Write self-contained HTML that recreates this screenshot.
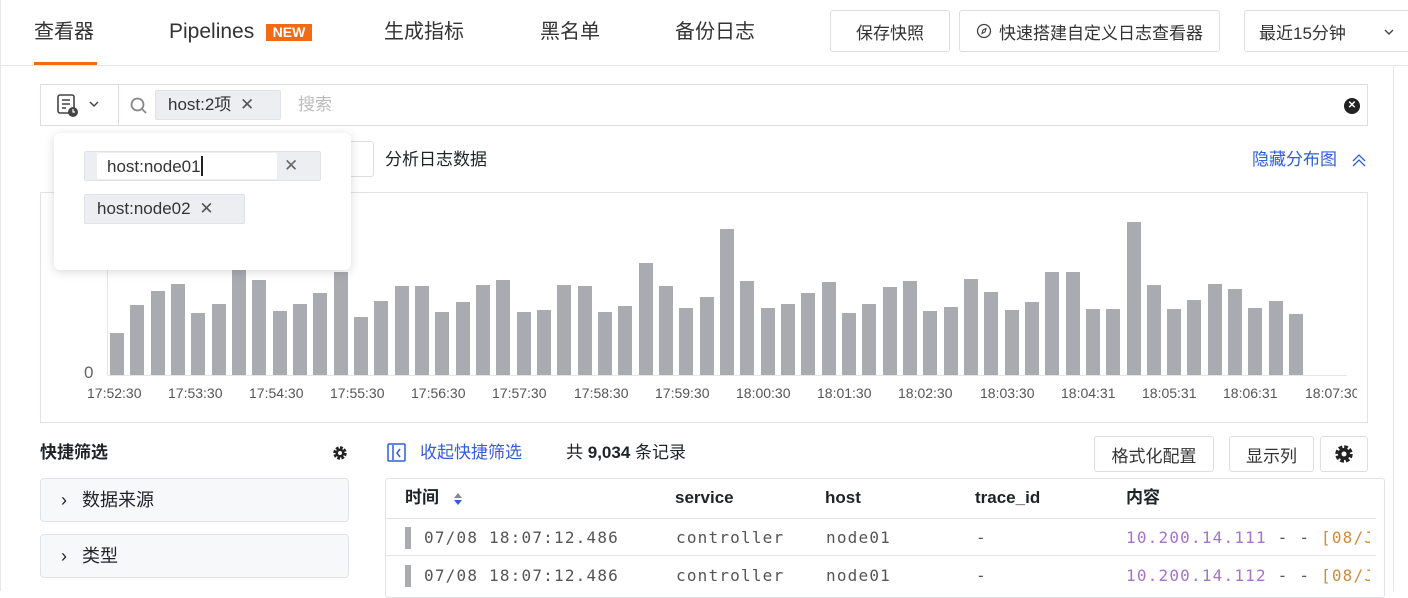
<!DOCTYPE html>
<html><head><meta charset="utf-8"><style>
*{box-sizing:border-box;margin:0;padding:0}
body{width:1408px;height:591px;overflow:hidden;background:#fff;font-family:"Liberation Sans","Noto Sans CJK SC",sans-serif;color:#1f2329;position:relative}
.a{position:absolute;line-height:1.25}
.tab{position:absolute;top:18px;font-size:20px;color:#333;line-height:28px;height:28px}
.btn{position:absolute;border:1px solid #dcdee3;border-radius:3px;background:#fff;font-size:16px;color:#333;display:flex;align-items:center;justify-content:center}
.bar{position:absolute;width:14px;background:#a9abb1}
.xl{position:absolute;top:385px;font-size:14px;color:#555}
.mono{font-family:"DejaVu Sans Mono","Liberation Mono",monospace;font-size:16px;color:#555;letter-spacing:1.2px}
.th{position:absolute;top:486px;font-size:17px;font-weight:bold;line-height:24px}
.tag{position:absolute;background:#eceef2;border:1px solid #e0e2e7;border-radius:2px;font-size:17px;color:#333}
</style></head><body>
<div class="a" style="left:0;top:0;width:1px;height:591px;background:#e6e7ea"></div>
<div class="a" style="left:0;top:65px;width:1408px;height:1px;background:#e6e7ea"></div>
<div class="tab" style="left:34px">查看器</div>
<div class="a" style="left:34px;top:62px;width:63px;height:3px;background:#f36a13"></div>
<div class="tab" style="left:169px;font-size:21px">Pipelines</div>
<div class="a" style="left:266px;top:24px;width:46px;height:17px;background:#f36a13;color:#fff;font-size:14px;font-weight:bold;text-align:center;line-height:17px">NEW</div>
<div class="tab" style="left:384px">生成指标</div>
<div class="tab" style="left:540px">黑名单</div>
<div class="tab" style="left:675px">备份日志</div>
<div class="btn" style="left:830px;top:10px;width:120px;height:42px;font-size:17px">保存快照</div>
<div class="btn" style="left:959px;top:10px;width:261px;height:42px;font-size:17px"><svg width="16" height="16" style="margin-right:7px"><circle cx="8" cy="8" r="6.5" fill="none" stroke="#444" stroke-width="1.3"/><path d="M10 5.5L7 7l-1 3.5 3-1.5z" fill="none" stroke="#444" stroke-width="1.1"/></svg>快速搭建自定义日志查看器</div>
<div class="btn" style="left:1244px;top:10px;width:170px;height:42px;justify-content:flex-start;padding-left:14px;font-size:17px">最近15分钟<svg style="position:absolute;left:138px;top:16px" width="12" height="10"><path d="M2 3l4 4 4-4" stroke="#444" stroke-width="1.4" fill="none"/></svg></div>
<div class="a" style="left:1393px;top:66px;width:1px;height:525px;background:#e6e7ea"></div>

<div class="a" style="left:40px;top:84px;width:1328px;height:42px;border:1px solid #dcdee3"></div>
<div class="a" style="left:118px;top:85px;width:1px;height:40px;background:#dcdee3"></div>
<svg class="a" style="left:57px;top:94px" width="48" height="24"><rect x="1" y="1" width="16" height="18" rx="2" fill="none" stroke="#444" stroke-width="1.6"/><path d="M5 6h8M5 10h8M5 14h4" stroke="#444" stroke-width="1.5"/><circle cx="16" cy="18" r="5" fill="#444"/><path d="M16 15v3h2" stroke="#fff" stroke-width="1.2" fill="none"/><path d="M33 8l4 4 4-4" stroke="#444" stroke-width="1.5" fill="none"/></svg>
<svg class="a" style="left:130px;top:97px" width="18" height="18"><circle cx="7.5" cy="7.5" r="6" fill="none" stroke="#888" stroke-width="1.8"/><path d="M12 12l4 4" stroke="#888" stroke-width="1.8"/></svg>
<div class="tag" style="left:155px;top:90px;width:126px;height:30px;padding:3px 12px;font-size:17px;line-height:22px">host:2项 <span style="color:#555;margin-left:4px">✕</span></div>
<div class="a" style="left:298px;top:94px;font-size:17px;color:#bbb">搜索</div>
<div class="a" style="left:1344px;top:98px;width:16px;height:16px;border-radius:50%;background:#222;color:#fff;font-size:10px;text-align:center;line-height:16px;font-weight:bold">✕</div>

<div class="a" style="left:340px;top:141px;width:34px;height:36px;border:1px solid #dcdee3;border-left:none;border-radius:0 3px 3px 0"></div>
<div class="a" style="left:385px;top:149px;font-size:17px">分析日志数据</div>
<div class="a" style="left:1252px;top:149px;font-size:17px;color:#2f5fd7">隐藏分布图</div>
<svg class="a" style="left:1351px;top:152px" width="16" height="16"><path d="M2 9l6-6 6 6M2 14l6-6 6 6" stroke="#2f5fd7" stroke-width="1.3" fill="none"/></svg>

<div class="a" style="left:40px;top:192px;width:1328px;height:231px;border:1px solid #e2e3e8"></div>
<div class="a" style="left:107px;top:262px;width:1px;height:114px;background:#e6e6e6"></div>
<div class="a" style="left:107px;top:375px;width:1240px;height:1px;background:#e6e6e6"></div>
<div class="a" style="left:84px;top:362px;font-size:17px;color:#666">0</div>
<div id="bars"></div>
<div class="xl" style="left:87px">17:52:30</div><div class="xl" style="left:168px">17:53:30</div><div class="xl" style="left:249px">17:54:30</div><div class="xl" style="left:330px">17:55:30</div><div class="xl" style="left:411px">17:56:30</div><div class="xl" style="left:492px">17:57:30</div><div class="xl" style="left:574px">17:58:30</div><div class="xl" style="left:655px">17:59:30</div><div class="xl" style="left:736px">18:00:30</div><div class="xl" style="left:817px">18:01:30</div><div class="xl" style="left:898px">18:02:30</div><div class="xl" style="left:980px">18:03:30</div><div class="xl" style="left:1061px">18:04:31</div><div class="xl" style="left:1142px">18:05:31</div><div class="xl" style="left:1223px">18:06:31</div><div class="xl" style="left:1305px;width:52px;overflow:hidden;white-space:nowrap">18:07:30</div>

<div class="a" style="left:54px;top:133px;width:297px;height:137px;background:#fff;border-radius:6px;box-shadow:0 2px 10px rgba(0,0,0,.15)"></div>
<div class="tag" style="left:84px;top:151px;width:237px;height:30px"></div>
<div class="a" style="left:97px;top:153px;width:180px;height:26px;background:#fff;border-radius:2px;font-size:17px;padding:3px 10px;color:#333;line-height:20px">host:node01<span style="display:inline-block;width:2px;height:20px;background:#222;vertical-align:-4px"></span></div>
<div class="a" style="left:284px;top:155px;font-size:17px;color:#666">✕</div>
<div class="tag" style="left:84px;top:194px;width:161px;height:30px;padding:3px 12px;line-height:22px">host:node02 <span style="color:#555;margin-left:4px">✕</span></div>

<div class="a" style="left:40px;top:442px;font-size:17px;font-weight:bold">快捷筛选</div>
<svg class="a" style="left:332px;top:445px" width="16" height="16"><circle cx="8" cy="8" r="5" fill="none" stroke="#222" stroke-width="3.5" stroke-dasharray="2.6 1.3"/><circle cx="8" cy="8" r="4.5" fill="#222"/><circle cx="8" cy="8" r="2" fill="#fff"/></svg>
<div class="a" style="left:40px;top:478px;width:309px;height:44px;border:1px solid #e2e3e8;border-radius:4px;background:#f7f8fa;font-size:18px;padding:10px 20px">›&nbsp;&nbsp;&nbsp;数据来源</div>
<div class="a" style="left:40px;top:534px;width:309px;height:44px;border:1px solid #e2e3e8;border-radius:4px;background:#f7f8fa;font-size:18px;padding:10px 20px">›&nbsp;&nbsp;&nbsp;类型</div>

<svg class="a" style="left:387px;top:443px" width="20" height="20"><rect x="1" y="1" width="17" height="17" rx="1" fill="none" stroke="#2f5fd7" stroke-width="1.5"/><path d="M6 2v15M13 6l-3 4 3 4" stroke="#2f5fd7" stroke-width="1.5" fill="none"/></svg>
<div class="a" style="left:420px;top:442px;font-size:17px;color:#2f5fd7">收起快捷筛选</div>
<div class="a" style="left:566px;top:442px;font-size:17px">共 <b>9,034</b> 条记录</div>
<div class="btn" style="left:1094px;top:436px;width:120px;height:36px;font-size:17px">格式化配置</div>
<div class="btn" style="left:1229px;top:436px;width:85px;height:36px;font-size:17px">显示列</div>
<div class="btn" style="left:1320px;top:436px;width:48px;height:36px"><svg width="20" height="20"><circle cx="10" cy="10" r="6.5" fill="none" stroke="#222" stroke-width="4.5" stroke-dasharray="3.4 1.7"/><circle cx="10" cy="10" r="6" fill="#222"/><circle cx="10" cy="10" r="2.5" fill="#fff"/></svg></div>

<div class="a" style="left:385px;top:478px;width:1000px;height:120px;border:1px solid #e2e3e8;border-radius:3px"></div>
<div class="a" style="left:386px;top:518px;width:990px;height:1px;background:#e2e3e8"></div>
<div class="a" style="left:386px;top:555px;width:990px;height:1px;background:#e2e3e8"></div>
<div class="th" style="left:405px">时间</div>
<svg class="a" style="left:452px;top:491px" width="12" height="16"><path d="M2 7l4-5 4 5z" fill="#888"/><path d="M2 9l4 5 4-5z" fill="#2f5fd7"/></svg>
<div class="th" style="left:675px">service</div><div class="th" style="left:825px">host</div><div class="th" style="left:975px">trace_id</div><div class="th" style="left:1126px">内容</div>
<div class="a" style="left:405px;top:527px;width:6px;height:22px;background:#a9abb1"></div>
<div class="a" style="left:405px;top:565px;width:6px;height:22px;background:#a9abb1"></div>
<div class="a mono" style="left:424px;top:528px">07/08 18:07:12.486</div>
<div class="a mono" style="left:424px;top:566px">07/08 18:07:12.486</div>
<div class="a mono" style="left:676px;top:528px">controller</div><div class="a mono" style="left:676px;top:566px">controller</div>
<div class="a mono" style="left:826px;top:528px">node01</div><div class="a mono" style="left:826px;top:566px">node01</div>
<div class="a mono" style="left:976px;top:528px">-</div><div class="a mono" style="left:976px;top:566px">-</div>
<div class="a mono" style="left:1126px;top:528px;width:244px;overflow:hidden;white-space:nowrap"><span style="color:#a574c8">10.200.14.111</span> - - <span style="color:#d08b3a">[08/Jul</span></div>
<div class="a mono" style="left:1126px;top:566px;width:244px;overflow:hidden;white-space:nowrap"><span style="color:#a574c8">10.200.14.112</span> - - <span style="color:#d08b3a">[08/Jul</span></div>
<script>
var t=[333,305,291,284,313,304,262,280,311,304,293,272,317,301,286,286,312,302,285,280,312,310,285,286,312,306,263,286,308,297,229,281,308,304,293,282,313,304,287,281,311,307,279,292,310,302,272,272,309,309,222,285,309,300,284,289,308,301,314];
var h='';for(var i=0;i<t.length;i++){var x=Math.round(110+i*20.33);h+='<div class="bar" style="left:'+x+'px;top:'+t[i]+'px;height:'+(375-t[i])+'px"></div>';}
document.getElementById('bars').innerHTML=h;
</script>
</body></html>
